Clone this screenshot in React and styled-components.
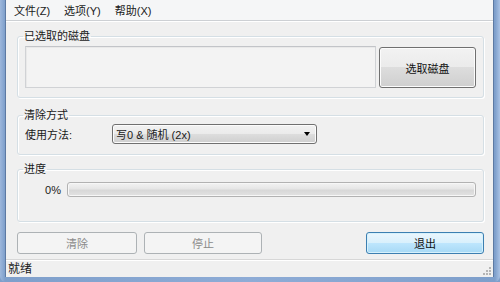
import React from "react";
import styled, { createGlobalStyle } from "styled-components";

const GlobalStyle = createGlobalStyle`
  html, body {
    margin: 0;
    padding: 0;
    width: 500px;
    height: 282px;
    overflow: hidden;
    background: #7e9fcb;
  }
  * {
    box-sizing: border-box;
  }
`;

const FONT = `"Liberation Sans", "Noto Sans CJK SC", sans-serif`;

function App() {
  return (
    <>
      <GlobalStyle />
      <Frame>
        <Inner>
          <MenuBar>
            <MenuItem>文件(Z)</MenuItem>
            <MenuItem>选项(Y)</MenuItem>
            <MenuItem>帮助(X)</MenuItem>
          </MenuBar>

          <Body>
            <Group $top={8}>
              <Legend>已选取的磁盘</Legend>
              <DiskRow>
                <DiskBox />
                <PushButton $w={97} $h={41}>选取磁盘</PushButton>
              </DiskRow>
            </Group>

            <Group $top={10} $pt={2} $pb={10}>
              <Legend>清除方式</Legend>
              <MethodRow>
                <FieldLabel>使用方法:</FieldLabel>
                <Combo>
                  <span>写0 &amp; 随机 (2x)</span>
                  <ComboArrow />
                </Combo>
              </MethodRow>
            </Group>

            <Group $top={7} $pt={6} $pb={24}>
              <Legend>进度</Legend>
              <ProgressRow>
                <Percent>0%</Percent>
                <ProgressTrack>
                  <ProgressFill style={{ width: "0%" }} />
                </ProgressTrack>
              </ProgressRow>
            </Group>

            <ButtonRow>
              <ActionButton $w={120} disabled>清除</ActionButton>
              <ActionButton $w={118} disabled>停止</ActionButton>
              <Spacer />
              <DefaultButton $w={118}>退出</DefaultButton>
            </ButtonRow>
          </Body>

          <StatusBar>
            <StatusText>就绪</StatusText>
            <SizeGrip>
              <svg width="10" height="10" viewBox="0 0 10 10">
                <g fill="#b5b5b5">
                  <rect x="7" y="1" width="2" height="2" />
                  <rect x="4" y="4" width="2" height="2" />
                  <rect x="7" y="4" width="2" height="2" />
                  <rect x="1" y="7" width="2" height="2" />
                  <rect x="4" y="7" width="2" height="2" />
                  <rect x="7" y="7" width="2" height="2" />
                </g>
              </svg>
            </SizeGrip>
          </StatusBar>
        </Inner>
      </Frame>
    </>
  );
}

export default App;

const Frame = styled.div`
  width: 500px;
  height: 282px;
  padding: 0 6px 5px 5px;
  background: linear-gradient(90deg, #9db7dc 0%, #7e9fcb 1%, #8eacd6 50%, #7e9fcb 99%, #a9c2e4 100%);
  border-radius: 0 0 6px 6px;
`;

const Inner = styled.div`
  height: 100%;
  display: flex;
  flex-direction: column;
  background: #f0f0f0;
  border: 1px solid #5d7aa3;
  border-top: none;
  font-family: ${FONT};
  font-size: 11px;
  color: #1a1a1a;
`;

const MenuBar = styled.div`
  height: 21px;
  display: flex;
  align-items: center;
  padding: 2px 0 0 1px;
  background: #f5f6f7;
  border-bottom: 1px solid #cdd0d4;
  box-shadow: 0 1px 0 #ffffff;
`;

const MenuItem = styled.div`
  padding: 0 7px;
  line-height: 18px;
  white-space: nowrap;
`;

const Body = styled.div`
  flex: 1;
  display: flex;
  flex-direction: column;
  padding: 0 9px 0 11px;
`;

const Group = styled.fieldset`
  margin: ${(p) => p.$top}px 0 0 0;
  padding: ${(p) => (p.$pt != null ? p.$pt : 3)}px 7px ${(p) => (p.$pb != null ? p.$pb : 9)}px 7px;
  min-width: 0;
  border: 1px solid #d5dfe5;
  border-radius: 3px;
  box-shadow: inset 1px 1px 0 #ffffff, 1px 1px 0 #ffffff;
`;

const Legend = styled.legend`
  margin-left: -2px;
  padding: 0 1px;
  font-size: 11px;
  line-height: 14px;
  color: #1a1a1a;
`;

const DiskRow = styled.div`
  display: flex;
  align-items: flex-start;
  gap: 3px;
`;

const DiskBox = styled.div`
  flex: 1;
  height: 42px;
  background: #f3f3f3;
  border: 1px solid #d0d2d5;
  border-top-color: #c2c4c8;
  box-shadow: inset 1px 1px 0 #e9e9e9;
`;

const PushButton = styled.button`
  width: ${(p) => p.$w}px;
  height: ${(p) => p.$h}px;
  margin-top: 1px;
  padding: 0;
  font-family: ${FONT};
  font-size: 11px;
  color: #111;
  border: 1px solid #707070;
  border-radius: 3px;
  background: linear-gradient(#f2f2f2 0%, #ebebeb 49%, #dddddd 50%, #cfcfcf 100%);
  box-shadow: inset 0 0 0 1px #fcfcfc;
`;

const MethodRow = styled.div`
  display: flex;
  align-items: center;
  height: 20px;
`;

const FieldLabel = styled.div`
  width: 87px;
  white-space: nowrap;
`;

const Combo = styled.div`
  width: 205px;
  height: 20px;
  display: flex;
  align-items: center;
  justify-content: space-between;
  padding: 0 6px 0 3px;
  border: 1px solid #707070;
  border-radius: 3px;
  background: linear-gradient(#f2f2f2 0%, #ebebeb 49%, #dddddd 50%, #cfcfcf 100%);
  box-shadow: inset 0 0 0 1px #fcfcfc;
  white-space: nowrap;
`;

const ComboArrow = styled.div`
  width: 0;
  height: 0;
  border-left: 3.5px solid transparent;
  border-right: 3.5px solid transparent;
  border-top: 4px solid #000;
`;

const ProgressRow = styled.div`
  display: flex;
  align-items: center;
  height: 15px;
`;

const Percent = styled.div`
  width: 36px;
  margin-right: 6px;
  text-align: right;
`;

const ProgressTrack = styled.div`
  flex: 1;
  height: 15px;
  border: 1px solid #b2b2b2;
  border-radius: 3px;
  background: linear-gradient(#f3f3f3 0%, #e6e6e6 45%, #d8d8d8 55%, #e2e2e2 100%);
  box-shadow: inset 0 0 0 1px #f7f7f7;
  overflow: hidden;
`;

const ProgressFill = styled.div`
  height: 100%;
  background: linear-gradient(#c8f0c0, #37c327);
`;

const ButtonRow = styled.div`
  display: flex;
  margin-top: 10px;
  gap: 7px;
`;

const Spacer = styled.div`
  flex: 1;
`;

const ActionButton = styled.button`
  width: ${(p) => p.$w}px;
  height: 22px;
  padding: 0;
  font-family: ${FONT};
  font-size: 11px;
  color: #8a8a8a;
  border: 1px solid #adb2b5;
  border-radius: 3px;
  background: #f4f4f4;
`;

const DefaultButton = styled.button`
  width: ${(p) => p.$w}px;
  height: 22px;
  padding: 0;
  font-family: ${FONT};
  font-size: 11px;
  color: #111;
  border: 1px solid #3c7fb1;
  border-radius: 3px;
  background: linear-gradient(#eaf6fd 0%, #d9f0fc 49%, #bee6fd 50%, #a7d9f5 100%);
  box-shadow: inset 0 0 0 1px #d6f1fc;
`;

const StatusBar = styled.div`
  margin-top: 5px;
  height: 18px;
  display: flex;
  align-items: center;
  justify-content: space-between;
  padding: 2px 1px 0 2px;
  border-top: 1px solid #d7d7d7;
  box-shadow: inset 0 1px 0 #ffffff;
  background: #f0f0f0;
`;

const StatusText = styled.div`
  line-height: 15px;
  font-size: 12px;
`;

const SizeGrip = styled.div`
  display: flex;
  align-self: flex-end;
  margin-bottom: 1px;
`;
